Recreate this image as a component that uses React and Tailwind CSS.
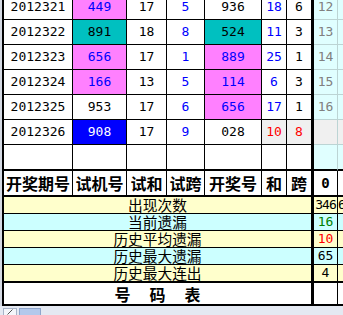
import React from "react";

const PINK = "bg-[#ff80ff]";
const TEAL = "bg-[#00c0c0]";
const BLUEBG = "bg-[#0000ff]";
const GRAYBG = "bg-[#f0f0f0]";
const BLUE = "text-[#0000ff]";
const RED = "text-[#ff0000]";
const GRAY = "text-[#808080]";

// widths include the right border of each cell
const W = [
  "w-[69px] border-r",
  "w-[54px] border-r",
  "w-[40px] border-r",
  "w-[38px] border-r",
  "w-[57px] border-r",
  "w-[25px] border-r",
  "w-[27px] border-r-[3px]",
];

const rows = [
  [["2012321"], ["449", BLUE, PINK], ["17"], ["5", BLUE], ["936"], ["18", BLUE], ["6"], ["12", GRAY]],
  [["2012322"], ["891", "", TEAL], ["18"], ["8", BLUE], ["524", "", TEAL], ["11", BLUE], ["3"], ["13", GRAY]],
  [["2012323"], ["656", BLUE, PINK], ["17"], ["1", BLUE], ["889", BLUE, PINK], ["25", BLUE], ["1"], ["14", GRAY]],
  [["2012324"], ["166", BLUE, PINK], ["13"], ["5", BLUE], ["114", BLUE, PINK], ["6", BLUE], ["3"], ["15", GRAY]],
  [["2012325"], ["953"], ["17"], ["6", BLUE], ["656", BLUE, PINK], ["17", BLUE], ["1"], ["16", GRAY]],
  [["2012326"], ["908", "text-white", BLUEBG], ["17"], ["9", BLUE], ["028"], ["10", RED, GRAYBG], ["8", RED, GRAYBG], ["", "", GRAYBG], ["", "", GRAYBG]],
];

const stats = [
  { label: "出现次数", value: "346", color: "text-black tracking-[-1px]", bg: "bg-[#ffffcc]", next: "6" },
  { label: "当前遗漏", value: "16", color: "text-[#008000]", bg: "bg-[#ccffff]" },
  { label: "历史平均遗漏", value: "10", color: RED, bg: "bg-[#ffffcc]" },
  { label: "历史最大遗漏", value: "65", color: "text-black", bg: "bg-[#ccffff]" },
  { label: "历史最大连出", value: "4", color: "text-black", bg: "bg-[#ffffcc]" },
];

function DataRow({ cells }) {
  const side = cells[7] || ["", "", "bg-[#e0ffff]"];
  const sideBg = side[2] || "bg-[#e0ffff]";
  const farBg = (cells[8] && cells[8][2]) || "bg-[#e0ffff]";
  return (
    <div className="flex h-[25px]">
      {cells.slice(0, 7).map((c, i) => (
        <div
          key={i}
          className={`${W[i]} border-b border-black flex items-center justify-center ${c[1] || "text-black"} ${c[2] || "bg-white"}`}
        >
          {c[0]}
        </div>
      ))}
      <div className={`w-[24px] border-r border-b border-[#bcd4d4] flex items-center justify-center ${side[1] || ""} ${sideBg}`}>
        {side[0]}
      </div>
      <div className={`w-[24px] border-b border-[#bcd4d4] ${farBg}`} />
    </div>
  );
}

function App() {
  const heads = ["开奖期号", "试机号", "试和", "试跨", "开奖号", "和", "跨"];
  return (
    <div className="w-[343px] h-[315px] overflow-hidden bg-[#e4e9f2] flex flex-col">
      <div className="h-[306px] overflow-hidden pl-[2px] bg-[#d4d9e3] shrink-0">
        <div className="w-[400px] mt-[-5px] border-l-2 border-black bg-white font-['DejaVu_Sans_Mono',monospace] text-[13px]">
          {rows.map((r, i) => (
            <DataRow key={i} cells={r} />
          ))}

          {/* empty row */}
          <div className="flex h-[26px]">
            {W.map((w, i) => (
              <div key={i} className={`${w} border-b-2 border-black bg-white`} />
            ))}
            <div className="w-[24px] border-r border-r-[#bcd4d4] border-b-2 border-b-black bg-[#e0ffff]" />
            <div className="w-[24px] border-b-2 border-black bg-[#e0ffff]" />
          </div>

          {/* header row */}
          <div className="flex h-[26px] font-['Noto_Sans_CJK_SC',sans-serif] font-bold text-[16px] text-black">
            {heads.map((h, i) => (
              <div key={i} className={`${W[i]} border-b-2 border-black bg-white flex items-center justify-center leading-none`}>
                {h}
              </div>
            ))}
            <div className="w-[24px] border-r border-b-2 border-black bg-white flex items-center justify-center font-['DejaVu_Sans_Mono',monospace] text-[14px]">
              0
            </div>
            <div className="w-[24px] border-b-2 border-black bg-white" />
          </div>

          {/* stats */}
          {stats.map((s, i) => {
            const last = i === stats.length - 1;
            return (
              <div key={i} className={`flex ${last ? "h-[18px]" : "h-[17px]"}`}>
                <div
                  className={`w-[310px] border-r-[3px] border-black ${last ? "border-b-2" : "border-b"} ${s.bg} flex items-center justify-center font-['Noto_Sans_CJK_SC',sans-serif] text-[14.7px] leading-none text-black`}
                >
                  {s.label}
                </div>
                <div
                  className={`w-[24px] border-r border-black ${last ? "border-b-2" : "border-b"} ${s.bg} ${s.color} flex items-center justify-center`}
                >
                  {s.value}
                </div>
                <div className={`w-[24px] border-black ${last ? "border-b-2" : "border-b"} ${s.bg} flex items-center text-black`}>
                  {s.next || ""}
                </div>
              </div>
            );
          })}

          {/* title row */}
          <div className="flex h-[23px]">
            <div className="w-[310px] border-r-[3px] border-b-2 border-black bg-white flex items-center justify-center gap-[19px] font-['Noto_Sans_CJK_SC',sans-serif] font-bold text-[16px] leading-none text-black">
              <span>号</span>
              <span>码</span>
              <span>表</span>
            </div>
            <div className="w-[24px] border-r border-b-2 border-black bg-white" />
            <div className="w-[24px] border-b-2 border-black bg-white" />
          </div>
        </div>
      </div>

      {/* sheet tab strip */}
      <div className="flex gap-[2px] pl-[3px] pt-[2px]">
        <div className="w-[14px] h-[8px] border border-[#a8b4c8] bg-[#f4f6fa] flex items-end justify-center overflow-hidden">
          <svg width="8" height="7" viewBox="0 0 8 7">
            <line x1="1.5" y1="6.5" x2="6.5" y2="1.5" stroke="#555" strokeWidth="1" />
          </svg>
        </div>
        <div className="w-[22px] h-[8px] border border-[#8ea6cc] bg-[#b4c9ec]" />
      </div>
    </div>
  );
}

export default App;
